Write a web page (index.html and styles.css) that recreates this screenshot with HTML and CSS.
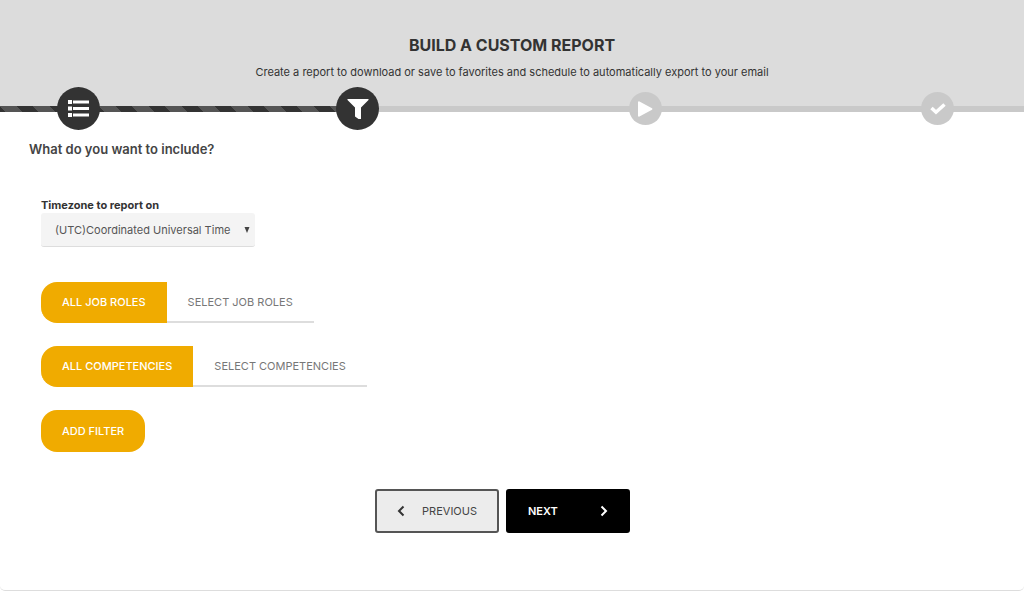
FILE: index.html
```html
<!DOCTYPE html>
<html lang="en">
<head>
    <meta charset="UTF-8">
    <meta name="viewport" content="width=device-width, initial-scale=1.0">
    <title>Build a custom report</title>
    <link rel="stylesheet" href="styles.css">
</head>
<body>
<div class="wizard">
    <header class="wizard-header">
        <h1>BUILD A CUSTOM REPORT</h1>
        <p>Create a report to download or save to favorites and schedule to automatically export to your email</p>
    </header>

    <!-- steps -->
    <div class="track">
        <div class="track-done"></div>
    </div>
    <ol class="steps">
        <li class="step step-active">
            <svg width="21" height="17" viewBox="0 0 21 17" fill="#fff" role="img" aria-label="Report type">
                <path d="M0 0h4v4H0zM5 0.500h16v3H5zM0 6.500h4v4H0zM5 7h16v3H5zM0 13h4v4H0zM5 13.500h16v3H5z"/>
            </svg>
        </li>
        <li class="step step-active">
            <svg width="22" height="20" viewBox="0 0 22 20" fill="#fff" role="img" aria-label="Filters">
                <path d="M0.500 0h21v1L14 8.500V20h-2.500L8 17.500v-9L0.500 1z"/>
            </svg>
        </li>
        <li class="step">
            <svg width="15" height="16" viewBox="0 0 15 16" fill="#fff" role="img" aria-label="Run">
                <path d="M1 0.300L14 7.200q1 0.800 0 1.600L1 15.700q-1 0-1-1V1.300q0-1 1-1z"/>
            </svg>
        </li>
        <li class="step">
            <svg width="16" height="12" viewBox="0 0 16 12" fill="none" stroke="#fff" stroke-width="3.500" role="img" aria-label="Finish">
                <path d="M1.500 5L6 9.200L14.500 1.500"/>
            </svg>
        </li>
    </ol>

    <!-- filters -->
    <form class="wizard-body">
        <h2>What do you want to include?</h2>

        <div class="filters">
            <div class="field">
                <label for="timezone">Timezone to report on</label>
                <div class="select-wrap">
                    <select id="timezone">
                        <option>(UTC)Coordinated Universal Time</option>
                    </select>
                    <svg class="caret" width="6" height="6" viewBox="0 0 6 6" fill="#444" aria-hidden="true"><path d="M0.500 0h5L3 6z"/></svg>
                </div>
            </div>

            <div class="toggle">
                <button type="button" class="toggle-item toggle-on">ALL JOB ROLES</button>
                <button type="button" class="toggle-item">SELECT JOB ROLES</button>
            </div>

            <div class="toggle">
                <button type="button" class="toggle-item toggle-on">ALL COMPETENCIES</button>
                <button type="button" class="toggle-item">SELECT COMPETENCIES</button>
            </div>

            <button type="button" class="add-filter">ADD FILTER</button>
        </div>

        <div class="wizard-nav">
            <button type="button" class="nav-button previous">
                <svg width="8" height="12" viewBox="0 0 8 12" fill="none" stroke="#333" stroke-width="2" aria-hidden="true"><path d="M6.500 1.500L2 6l4.500 4.500"/></svg>
                <span>PREVIOUS</span>
            </button>
            <button type="button" class="nav-button next">
                <span>NEXT</span>
                <svg width="8" height="12" viewBox="0 0 8 12" fill="none" stroke="#fff" stroke-width="2" aria-hidden="true"><path d="M1.500 1.500L6 6l-4.500 4.500"/></svg>
            </button>
        </div>
    </form>
</div>
</body>
</html>
```
FILE: styles.css
```css
* {
    box-sizing: border-box;
}

body {
    margin: 0;
    background-color: #fff;
    color: #333;
    font-family: Inter, "Liberation Sans", sans-serif;
    font-size: 11px;
}

h1, h2, p, ol {
    margin: 0;
    padding: 0;
}

button, select {
    font-family: inherit;
    font-size: 11px;
    cursor: pointer;
}

.wizard {
    border-bottom: 1px solid #ddd;
    border-radius: 5px;
}

.wizard-header {
    padding: 33px 16px 26px;
    background-color: #dcdcdc;
    text-align: center;
}

.wizard-header h1 {
    font-size: 16px;
    font-weight: 700;
    line-height: 24px;
}

.wizard-header p {
    margin-top: 7px;
    line-height: 16px;
}

/* steps */
.track {
    height: 6px;
    background-color: #c9c9c9;
}

.track-done {
    width: 34%;
    height: 6px;
    background-color: #333;
    background-image: linear-gradient(45deg, #555 25%, #333 25%, #333 50%, #555 50%, #555 75%, #333 75%);
    background-position: 6px bottom;
    background-size: 33px 33px;
}

.steps {
    position: relative;
    display: grid;
    grid-template-columns: 279fr 293fr 292fr 33px;
    align-items: center;
    height: 43px;
    margin-top: -25px;
    padding: 0 70px 0 57px;
    list-style: none;
}

.step {
    display: flex;
    align-items: center;
    justify-content: center;
    width: 33px;
    height: 33px;
    border-radius: 50%;
    background-color: #c9c9c9;
}

.step-active {
    width: 43px;
    height: 43px;
    background-color: #333;
}

/* filters */
.wizard-body {
    padding: 9px 29px 57px;
}

.wizard-body h2 {
    color: #444;
    font-size: 13px;
    font-weight: 600;
    line-height: 20px;
}

.filters {
    display: flex;
    flex-direction: column;
    align-items: flex-start;
    gap: 23px;
    padding: 38px 12px 37px;
}

.field {
    margin-bottom: 12px;
}

.field label {
    display: block;
    font-weight: 700;
    line-height: 16px;
}

.select-wrap {
    position: relative;
}

.select-wrap select {
    width: 214px;
    height: 34px;
    padding: 0 14px;
    border: 0;
    border-bottom: 1px solid #ddd;
    border-radius: 3px;
    background-color: #f4f4f4;
    color: #555;
    appearance: none;
}

.caret {
    position: absolute;
    top: 14px;
    right: 5px;
    pointer-events: none;
}

.toggle {
    display: flex;
}

.toggle-item {
    height: 41px;
    padding: 0 21px;
    border: 0;
    border-bottom: 2px solid #ddd;
    background-color: #fff;
    color: #777;
}

.toggle-on {
    border-bottom-color: #f0ab00;
    border-radius: 16px 0 0 16px;
    background-color: #f0ab00;
    color: #fff;
    font-weight: 500;
}

.add-filter {
    height: 42px;
    padding: 0 21px;
    border: 0;
    border-radius: 16px;
    background-color: #f0ab00;
    color: #fff;
    font-weight: 500;
}

.wizard-nav {
    display: flex;
    justify-content: center;
    gap: 7px;
    padding-right: 19px;
}

.nav-button {
    display: flex;
    align-items: center;
    justify-content: space-between;
    width: 124px;
    height: 44px;
    padding: 0 20px;
    border: 2px solid #000;
    border-radius: 3px;
}

.previous {
    border-color: #555;
    background-color: #ececec;
    color: #444;
}

.next {
    background-color: #000;
    color: #fff;
    font-weight: 600;
}
```
